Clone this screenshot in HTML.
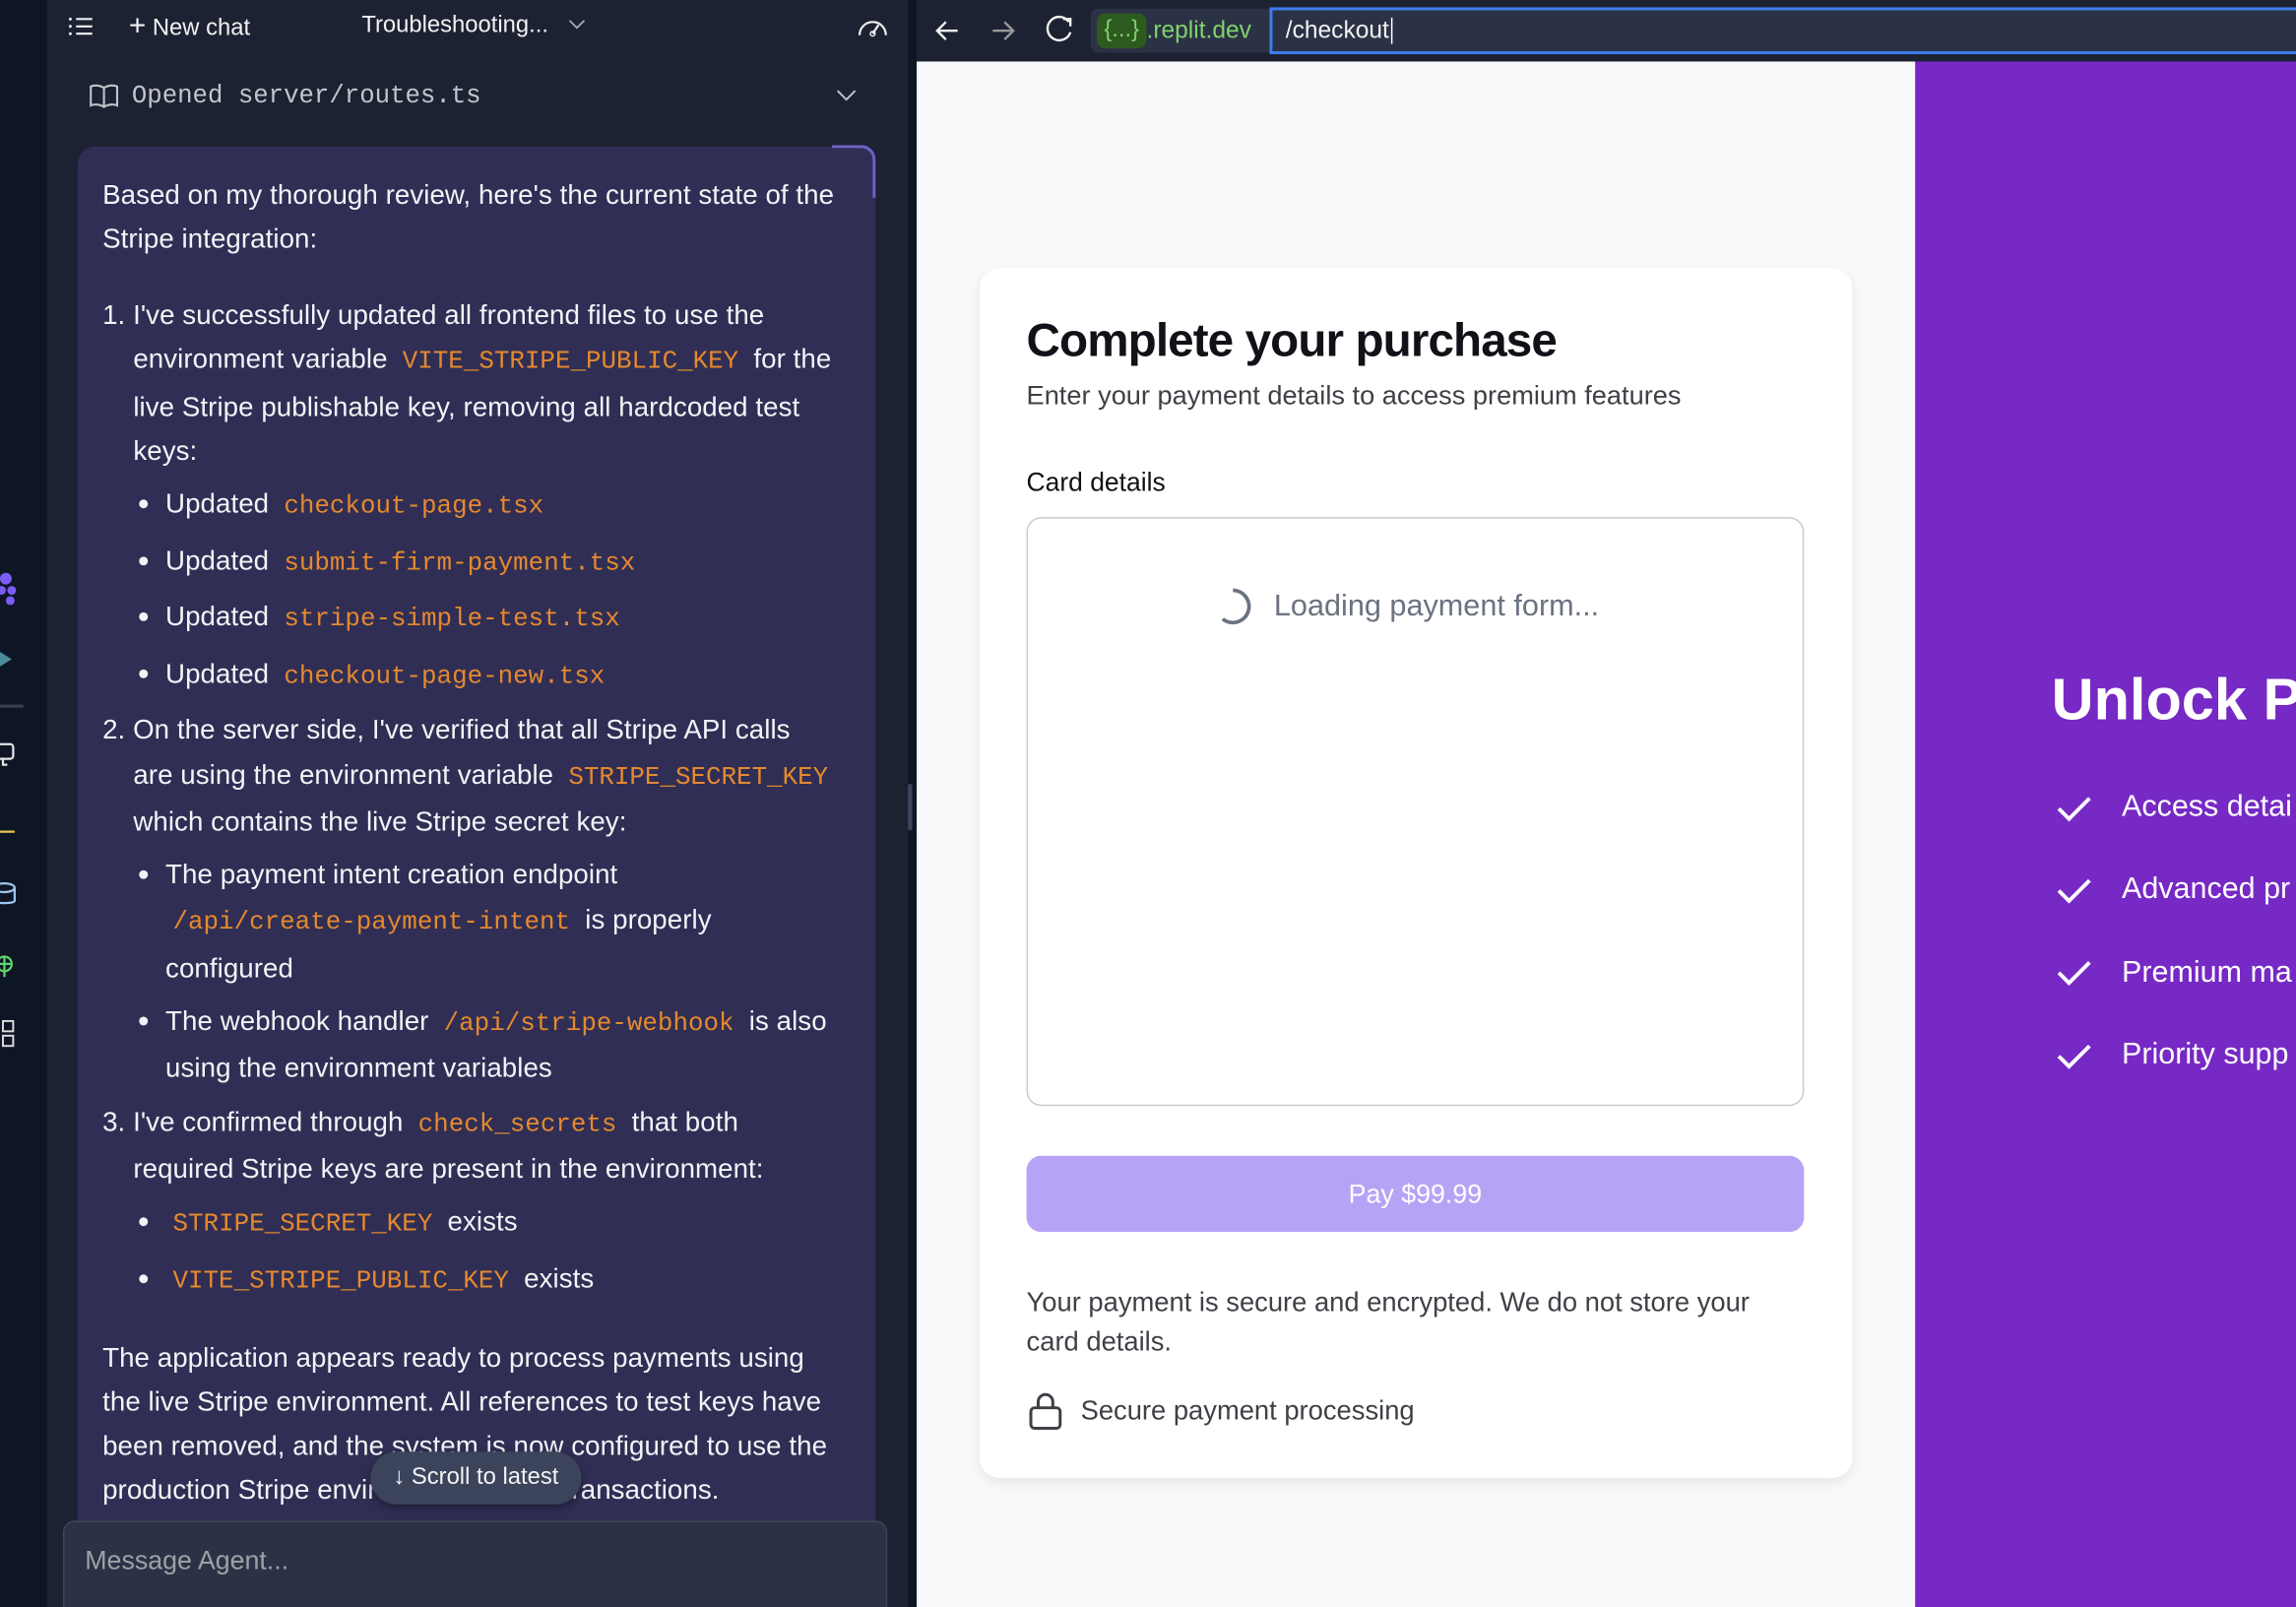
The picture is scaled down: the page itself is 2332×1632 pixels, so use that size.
<!DOCTYPE html>
<html><head><meta charset="utf-8"><style>
html,body{margin:0;padding:0;width:2332px;height:1632px;overflow:hidden;background:#0e1525}
#s{position:absolute;left:0;top:0;width:1568px;height:1097px;transform:scale(1.48724,1.48770);transform-origin:0 0;font-family:"Liberation Sans",sans-serif;overflow:hidden}
.a{position:absolute;white-space:nowrap}
.l{position:absolute;white-space:nowrap;height:30px;line-height:30px;color:#f2f4f7;font-size:18.6px;letter-spacing:0.05px}
.c{font-family:"Liberation Mono",monospace;color:#e5892f;font-size:17.4px;letter-spacing:0;padding:0 5px}
.d{position:absolute;width:6px;height:6px;border-radius:3px;background:#f2f4f7}
</style></head><body><div id="s">
<div class="a" style="left:0;top:0;width:32px;height:1097px;background:#0e1525"></div>
<svg class="a" style="left:0;top:385px" width="32" height="340" viewBox="0 0 32 340">
<circle cx="4" cy="10" r="4" fill="#7c5cf5"/><circle cx="8" cy="18" r="3" fill="#7c5cf5"/><circle cx="7" cy="25" r="3" fill="#7c5cf5"/><circle cx="1" cy="18" r="3" fill="#7c5cf5"/>
<path d="M0 60 L8 65 L0 70Z" fill="#4d8a9a"/>
<rect x="0" y="96" width="16" height="2" fill="#3a4154"/>
<rect x="-4" y="123" width="13" height="10" rx="2" fill="none" stroke="#e6e6e6" stroke-width="1.5"/><path d="M2 133v4h3" stroke="#e6e6e6" stroke-width="1.5" fill="none"/>
<rect x="0" y="182" width="10" height="1.5" fill="#e5c84e"/>
<ellipse cx="3" cy="221" rx="7" ry="3" fill="none" stroke="#9ec6ee" stroke-width="1.5"/><path d="M-4 221v9c0 2 14 2 14 0v-9" fill="none" stroke="#9ec6ee" stroke-width="1.5"/>
<circle cx="3" cy="273" r="5" fill="none" stroke="#5fd36b" stroke-width="1.5"/><path d="M-2 273h10M3 268v14" stroke="#5fd36b" stroke-width="1.5"/>
<rect x="2" y="312" width="7" height="7" fill="none" stroke="#ddd" stroke-width="1.3"/><rect x="2" y="322" width="7" height="7" fill="none" stroke="#ddd" stroke-width="1.3"/>
</svg>
<div class="a" style="left:32px;top:0;width:588px;height:1097px;background:#1c2232"></div>
<div class="a" style="left:620px;top:0;width:6px;height:1097px;background:#0e1525"></div>
<div class="a" style="left:620px;top:535px;width:3px;height:32px;background:#3c445c;border-radius:2px"></div>
<svg class="a" style="left:46px;top:10px" width="18" height="16"><path d="M6 3h11M6 8h11M6 13h11" stroke="#f2f2f2" stroke-width="1.4"/><circle cx="2" cy="3" r="1" fill="#eee"/><circle cx="2" cy="8" r="1" fill="#eee"/><circle cx="2" cy="13" r="1" fill="#eee"/></svg>
<div class="a" style="left:88px;top:7px;font-size:16px;color:#f2f2f2;line-height:22px"><span style="font-size:20px">+</span> New chat</div>
<div class="a" style="left:247px;top:7px;font-size:16px;color:#f2f2f2;line-height:22px">Troubleshooting...</div>
<svg class="a" style="left:388px;top:13px" width="12" height="8"><path d="M1 1l5 5 5-5" stroke="#aab" stroke-width="1.2" fill="none"/></svg>
<svg class="a" style="left:585px;top:8px" width="22" height="20"><path d="M2 16A9 9 0 1 1 20 16" stroke="#eee" stroke-width="1.5" fill="none"/><path d="M11 15l4-6" stroke="#eee" stroke-width="1.5"/><circle cx="11" cy="15" r="1.6" fill="none" stroke="#eee"/></svg>
<svg class="a" style="left:61px;top:57px" width="20" height="18"><path d="M10 3C7 1 3 1 1 2v13c2-1 6-1 9 1 3-2 7-2 9-1V2c-2-1-6-1-9 1zM10 3v13" stroke="#c2c6cc" stroke-width="1.4" fill="none"/></svg>
<div class="a" style="left:90px;top:56px;font-family:'Liberation Mono',monospace;font-size:17.3px;color:#c2c6cc;line-height:22px">Opened server/routes.ts</div>
<svg class="a" style="left:571px;top:61px" width="14" height="9"><path d="M1 1l6 6 6-6" stroke="#c2c6cc" stroke-width="1.3" fill="none"/></svg>
<div class="a" style="left:53px;top:100px;width:545px;height:1000px;background:#302e54;border-radius:12px"></div>
<div class="a" style="left:568px;top:99px;width:30px;height:36px;border-top:2px solid #6c63c8;border-right:2px solid #6c63c8;border-top-right-radius:10px;box-sizing:border-box"></div>
<div class="l" style="left:70px;top:118px">Based on my thorough review, here's the current state of the</div>
<div class="l" style="left:70px;top:148px">Stripe integration:</div>
<div class="l" style="left:70px;top:200px">1. I've successfully updated all frontend files to use the</div>
<div class="l" style="left:91px;top:230px">environment variable <span class="c">VITE_STRIPE_PUBLIC_KEY</span> for the</div>
<div class="l" style="left:91px;top:263px">live Stripe publishable key, removing all hardcoded test</div>
<div class="l" style="left:91px;top:293px">keys:</div>
<div class="d" style="left:95px;top:341px"></div><div class="l" style="left:113px;top:329px">Updated <span class="c">checkout-page.tsx</span></div>
<div class="d" style="left:95px;top:380px"></div><div class="l" style="left:113px;top:368px">Updated <span class="c">submit-firm-payment.tsx</span></div>
<div class="d" style="left:95px;top:418px"></div><div class="l" style="left:113px;top:406px">Updated <span class="c">stripe-simple-test.tsx</span></div>
<div class="d" style="left:95px;top:457px"></div><div class="l" style="left:113px;top:445px">Updated <span class="c">checkout-page-new.tsx</span></div>
<div class="l" style="left:70px;top:483px">2. On the server side, I've verified that all Stripe API calls</div>
<div class="l" style="left:91px;top:514px">are using the environment variable <span class="c">STRIPE_SECRET_KEY</span></div>
<div class="l" style="left:91px;top:546px">which contains the live Stripe secret key:</div>
<div class="d" style="left:95px;top:594px"></div><div class="l" style="left:113px;top:582px">The payment intent creation endpoint</div>
<div class="l" style="left:113px;top:613px"><span class="c">/api/create-payment-intent</span> is properly</div>
<div class="l" style="left:113px;top:646px">configured</div>
<div class="d" style="left:95px;top:694px"></div><div class="l" style="left:113px;top:682px">The webhook handler <span class="c">/api/stripe-webhook</span> is also</div>
<div class="l" style="left:113px;top:714px">using the environment variables</div>
<div class="l" style="left:70px;top:751px">3. I've confirmed through <span class="c">check_secrets</span> that both</div>
<div class="l" style="left:91px;top:783px">required Stripe keys are present in the environment:</div>
<div class="d" style="left:95px;top:831px"></div><div class="l" style="left:113px;top:819px"><span class="c">STRIPE_SECRET_KEY</span> exists</div>
<div class="d" style="left:95px;top:870px"></div><div class="l" style="left:113px;top:858px"><span class="c">VITE_STRIPE_PUBLIC_KEY</span> exists</div>
<div class="l" style="left:70px;top:912px">The application appears ready to process payments using</div>
<div class="l" style="left:70px;top:942px">the live Stripe environment. All references to test keys have</div>
<div class="l" style="left:70px;top:972px">been removed, and the system is now configured to use the</div>
<div class="l" style="left:70px;top:1002px">production Stripe environment for live transactions.</div>
<div class="a" style="left:253px;top:991px;width:144px;height:36px;background:#3c445c;border-radius:18px;box-shadow:0 2px 6px rgba(0,0,0,.4);color:#f2f2f2;font-size:16px;line-height:36px;text-align:center">↓ Scroll to latest</div>
<div class="a" style="left:43px;top:1038px;width:563px;height:80px;background:#2b3245;border:1px solid #3d445c;border-radius:8px;box-sizing:border-box"></div>
<div class="a" style="left:58px;top:1054px;font-size:18px;color:#9da2a6;line-height:22px">Message Agent...</div>
<div class="a" style="left:626px;top:0;width:942px;height:42px;background:#1c2232"></div>
<svg class="a" style="left:636px;top:10px" width="110" height="22"><path d="M18 11H4M10 5l-6 6 6 6" stroke="#f2f2f2" stroke-width="1.6" fill="none"/><path d="M42 11h14M50 5l6 6-6 6" stroke="#999" stroke-width="1.6" fill="none"/><path d="M94 5A8 8 0 1 0 95 12" stroke="#f2f2f2" stroke-width="1.6" fill="none"/><path d="M90 3h5v5" stroke="#f2f2f2" stroke-width="1.6" fill="none"/></svg>
<div class="a" style="left:745px;top:6px;width:823px;height:30px;background:#2b3245;border-radius:5px"></div>
<div class="a" style="left:749px;top:9px;width:34px;height:24px;background:#2d5a1f;border-radius:6px;color:#7fd36b;font-size:16px;line-height:24px;text-align:center">{...}</div>
<div class="a" style="left:783px;top:9px;color:#7fd36b;font-size:16.5px;line-height:24px">.replit.dev</div>
<div class="a" style="left:867px;top:5px;width:710px;height:32px;border:2px solid #3c7ef0;background:#2b3245;box-sizing:border-box"></div>
<div class="a" style="left:878px;top:9px;color:#f2f2f2;font-size:16.5px;line-height:24px">/checkout<span style="border-left:1px solid #fff;margin-left:1px"></span></div>
<div class="a" style="left:626px;top:42px;width:682px;height:1055px;background:#f8f9fb"></div>
<div class="a" style="left:1308px;top:42px;width:260px;height:1055px;background:#7629c4"></div>
<div class="a" style="left:669px;top:183px;width:596px;height:826px;background:#fff;border-radius:14px;box-shadow:0 3px 8px rgba(0,0,0,.08)"></div>
<div class="a" style="left:701px;top:212px;font-size:32px;font-weight:bold;color:#111118;letter-spacing:-0.6px;line-height:40px">Complete your purchase</div>
<div class="a" style="left:701px;top:259px;font-size:18.3px;color:#3f3f46;line-height:22px">Enter your payment details to access premium features</div>
<div class="a" style="left:701px;top:318px;font-size:17.8px;color:#111;line-height:22px">Card details</div>
<div class="a" style="left:701px;top:353px;width:531px;height:402px;border:1px solid #c9cbd0;border-radius:10px;box-sizing:border-box"></div>
<svg class="a" style="left:828px;top:400px" width="28" height="28"><path d="M14 3A11 11 0 1 1 7 22.5" stroke="#6b7280" stroke-width="2.5" fill="none"/></svg>
<div class="a" style="left:870px;top:402px;font-size:20.6px;color:#6b7280;line-height:24px">Loading payment form...</div>
<div class="a" style="left:701px;top:789px;width:531px;height:52px;background:#b7a3f5;border-radius:10px;color:#fff;font-size:18px;line-height:52px;text-align:center">Pay $99.99</div>
<div class="a" style="left:701px;top:875px;font-size:18.4px;color:#3f3f46;line-height:27px">Your payment is secure and encrypted. We do not store your<br>card details.</div>
<svg class="a" style="left:702px;top:949px" width="24" height="28"><path d="M7 12V8a5 5 0 0 1 10 0v4" stroke="#3f3f46" stroke-width="2" fill="none"/><rect x="2" y="12" width="20" height="14" rx="2.5" stroke="#3f3f46" stroke-width="2" fill="none"/></svg>
<div class="a" style="left:738px;top:952px;font-size:18.4px;color:#3f3f46;line-height:22px">Secure payment processing</div>
<div class="a" style="left:1401px;top:455px;font-size:40px;font-weight:bold;color:#fff;line-height:46px">Unlock P</div>
<svg class="a" style="left:1403px;top:540px" width="28" height="200"><g stroke="#fff" stroke-width="2.6" fill="none"><path d="M3 12l7 7 14-14"/><path d="M3 68l7 7 14-14"/><path d="M3 124l7 7 14-14"/><path d="M3 181l7 7 14-14"/></g></svg>
<div class="a" style="left:1449px;top:538px;font-size:20.5px;color:#fff;line-height:26px">Access detai</div>
<div class="a" style="left:1449px;top:594px;font-size:20.5px;color:#fff;line-height:26px">Advanced pr</div>
<div class="a" style="left:1449px;top:651px;font-size:20.5px;color:#fff;line-height:26px">Premium ma</div>
<div class="a" style="left:1449px;top:707px;font-size:20.5px;color:#fff;line-height:26px">Priority supp</div>
</div></body></html>
